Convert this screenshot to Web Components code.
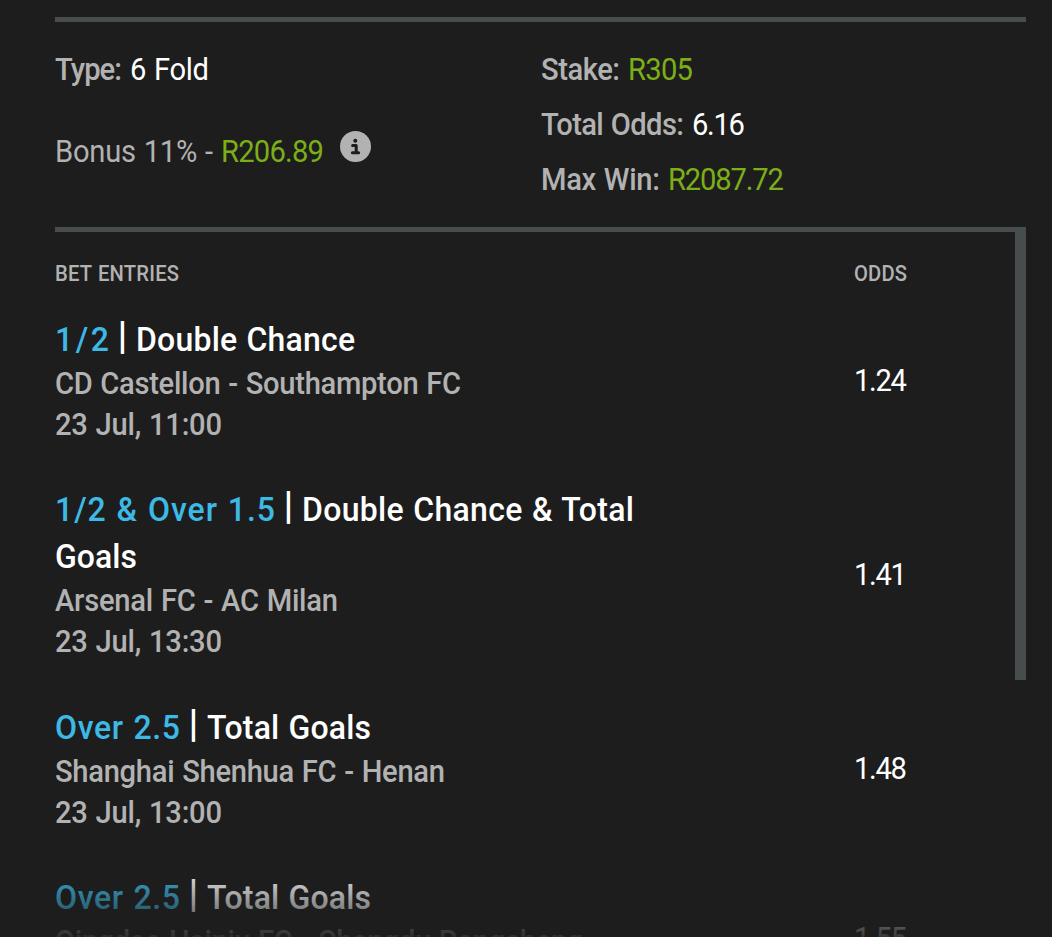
<!DOCTYPE html>
<html lang="en">
<head>
<meta charset="utf-8">
<title>Bet Slip</title>
<style>
    html, body {
        margin: 0;
        height: 100%;
        background: #1d1d1d;
        overflow: hidden;
    }

    body {
        --muted: #b2b2b2;
        --line: #474c4c;
        --green: #7cae18;
        --blue: #3cb9e4;
        font-family: Roboto, "Liberation Sans", sans-serif;
        font-size: 31px;
        word-spacing: 1px;
        color: #fff;
    }
</style>
</head>
<body>
<bet-slip></bet-slip>

<script>
// Slightly condensed text run, tracked out (or in) to fill a set width
const CONDENSE = 0.94;

class FitText extends HTMLElement {
    constructor() {
        super();
        this.attachShadow({ mode: 'open' });
    }

    connectedCallback() {
        this.shadowRoot.innerHTML = `<style>
                :host {
                    display: inline-block;
                    white-space: nowrap;
                }

                span {
                    display: inline-block;
                    transform-origin: left;
                    transform: scaleX(${CONDENSE});
                }
            </style><span><slot></slot></span>`;
        const span = this.shadowRoot.querySelector('span');
        const target = Number(this.getAttribute('width'));
        const natural = span.getBoundingClientRect().width / CONDENSE;
        const spacing = (target / CONDENSE - natural) / (this.textContent.length - 1);
        this.style.letterSpacing = `${spacing.toFixed(3)}px`;
        this.style.width = `${target}px`;
    }
}

class InfoIcon extends HTMLElement {
    constructor() {
        super();
        this.attachShadow({ mode: 'open' });
        this.shadowRoot.innerHTML = `
            <style>
                :host {
                    display: block;
                    width: 31px;
                    height: 31px;
                }

                svg {
                    display: block;
                }
            </style>
            <svg width="31" height="31" viewBox="0 0 31 31">
                <circle cx="15.5" cy="15.5" r="15.5" fill="#b2b2b2"/>
                <circle cx="15.3" cy="9.8" r="2" fill="#1d1d1d"/>
                <path d="M12.6 14.5H16.2V21.6M12.4 21.8H18.6" fill="none" stroke="#1d1d1d" stroke-width="3" stroke-linecap="round" stroke-linejoin="round"/>
            </svg>
        `;
    }
}

class SlipSummary extends HTMLElement {
    constructor() {
        super();
        this.attachShadow({ mode: 'open' });
        this.shadowRoot.innerHTML = `
            <style>
                :host {
                    display: grid;
                    grid-template-columns: 486px 1fr;
                    box-sizing: border-box;
                    height: 215px;
                    padding-top: 20px;
                    border-top: 5px solid var(--line);
                    border-bottom: 5px solid var(--line);
                }

                .row {
                    display: flex;
                    gap: 8px;
                    height: 55px;
                    line-height: 55px;
                }

                .bonus {
                    margin-top: 27px;
                }

                .label, .note {
                    color: var(--muted);
                }

                .label {
                    font-weight: 500;
                }

                .money {
                    color: var(--green);
                }

                info-icon {
                    margin: 7px 0 0 8px;
                }
            </style>
            <div>
                <div class="row"><fit-text class="label" width="67">Type:</fit-text><fit-text width="79">6 Fold</fit-text></div>
                <div class="row bonus"><fit-text class="note" width="158">Bonus 11% -</fit-text><fit-text class="money" width="103">R206.89</fit-text><info-icon></info-icon></div>
            </div>
            <div>
                <div class="row"><fit-text class="label" width="79">Stake:</fit-text><fit-text class="money" width="65">R305</fit-text></div>
                <div class="row"><fit-text class="label" width="143">Total Odds:</fit-text><fit-text width="53">6.16</fit-text></div>
                <div class="row"><fit-text class="label" width="119">Max Win:</fit-text><fit-text class="money" width="116">R2087.72</fit-text></div>
            </div>
        `;
    }
}

class BetEntry extends HTMLElement {
    constructor() {
        super();
        this.attachShadow({ mode: 'open' });
        this.shadowRoot.innerHTML = `
            <style>
                :host {
                    display: grid;
                    grid-template-columns: 799px 1fr;
                    align-items: center;
                }

                .title {
                    display: flex;
                    flex-wrap: wrap;
                    align-items: flex-start;
                    column-gap: 10px;
                    font-size: 34px;
                    font-weight: 500;
                    line-height: 47px;
                    width: 640px;
                }

                ::slotted([slot="pick"]) {
                    color: var(--blue);
                }

                .meta {
                    display: flex;
                    flex-direction: column;
                    line-height: 41px;
                    font-weight: 500;
                    color: var(--muted);
                }

                .bar {
                    display: flex;
                    justify-content: center;
                    width: 7px;
                    font-size: 39px;
                    font-weight: 600;
                    line-height: 41px;
                }
            </style>
            <div>
                <div class="title"><slot name="pick"></slot><span class="bar">|</span><slot name="market"></slot></div>
                <div class="meta"><slot name="match"></slot><slot name="date"></slot></div>
            </div>
            <slot name="odds"></slot>
        `;
    }
}

class BetSlip extends HTMLElement {
    constructor() {
        super();
        this.attachShadow({ mode: 'open' });
        this.shadowRoot.innerHTML = `
            <style>
                :host {
                    display: flex;
                    flex-direction: column;
                    position: relative;
                    box-sizing: border-box;
                    height: 937px;
                    padding: 17px 26px 0 55px;
                    overflow: hidden;
                }

                .body {
                    display: grid;
                    grid-template-columns: 1fr 11px;
                    align-items: start;
                    height: 705px;
                }

                .head {
                    display: grid;
                    grid-template-columns: 799px 1fr;
                    height: 84px;
                    line-height: 84px;
                    font-size: 21.5px;
                    font-weight: 500;
                    color: var(--muted);
                }

                .list {
                    display: flex;
                    flex-direction: column;
                    gap: 41.35px;
                }

                .thumb {
                    height: 448px;
                    background: var(--line);
                }

                .fade {
                    position: absolute;
                    left: 0;
                    right: 0;
                    bottom: 0;
                    height: 76px;
                    background: linear-gradient(rgba(29, 29, 29, 0), rgba(29, 29, 29, 0.88));
                }
            </style>
            <slip-summary></slip-summary>
            <div class="body">
                <div>
                    <div class="head"><fit-text width="124">BET ENTRIES</fit-text><fit-text width="53">ODDS</fit-text></div>
                    <div class="list">
                        <bet-entry>
                            <fit-text slot="pick" width="54">1/2</fit-text>
                            <fit-text slot="market" width="219">Double Chance</fit-text>
                            <fit-text slot="match" width="406">CD Castellon - Southampton FC</fit-text>
                            <fit-text slot="date" width="167">23 Jul, 11:00</fit-text>
                            <fit-text slot="odds" width="53">1.24</fit-text>
                        </bet-entry>
                        <bet-entry>
                            <fit-text slot="pick" width="220">1/2 &amp; Over 1.5</fit-text>
                            <fit-text slot="market" width="332">Double Chance &amp; Total</fit-text>
                            <fit-text slot="market" width="82">Goals</fit-text>
                            <fit-text slot="match" width="283">Arsenal FC - AC Milan</fit-text>
                            <fit-text slot="date" width="167">23 Jul, 13:30</fit-text>
                            <fit-text slot="odds" width="53">1.41</fit-text>
                        </bet-entry>
                        <bet-entry>
                            <fit-text slot="pick" width="125">Over 2.5</fit-text>
                            <fit-text slot="market" width="164">Total Goals</fit-text>
                            <fit-text slot="match" width="390">Shanghai Shenhua FC - Henan</fit-text>
                            <fit-text slot="date" width="167">23 Jul, 13:00</fit-text>
                            <fit-text slot="odds" width="53">1.48</fit-text>
                        </bet-entry>
                        <bet-entry>
                            <fit-text slot="pick" width="125">Over 2.5</fit-text>
                            <fit-text slot="market" width="164">Total Goals</fit-text>
                            <fit-text slot="match" width="528">Qingdao Hainiu FC - Chengdu Rongcheng</fit-text>
                            <fit-text slot="date" width="167">23 Jul, 13:35</fit-text>
                            <fit-text slot="odds" width="53">1.55</fit-text>
                        </bet-entry>
                    </div>
                </div>
                <div class="thumb"></div>
            </div>
            <div class="fade"></div>
        `;
    }
}

customElements.define('info-icon', InfoIcon);
customElements.define('slip-summary', SlipSummary);
customElements.define('bet-entry', BetEntry);
customElements.define('bet-slip', BetSlip);
// Defined last so every run is measured with its final font
customElements.define('fit-text', FitText);
</script>
</body>
</html>
